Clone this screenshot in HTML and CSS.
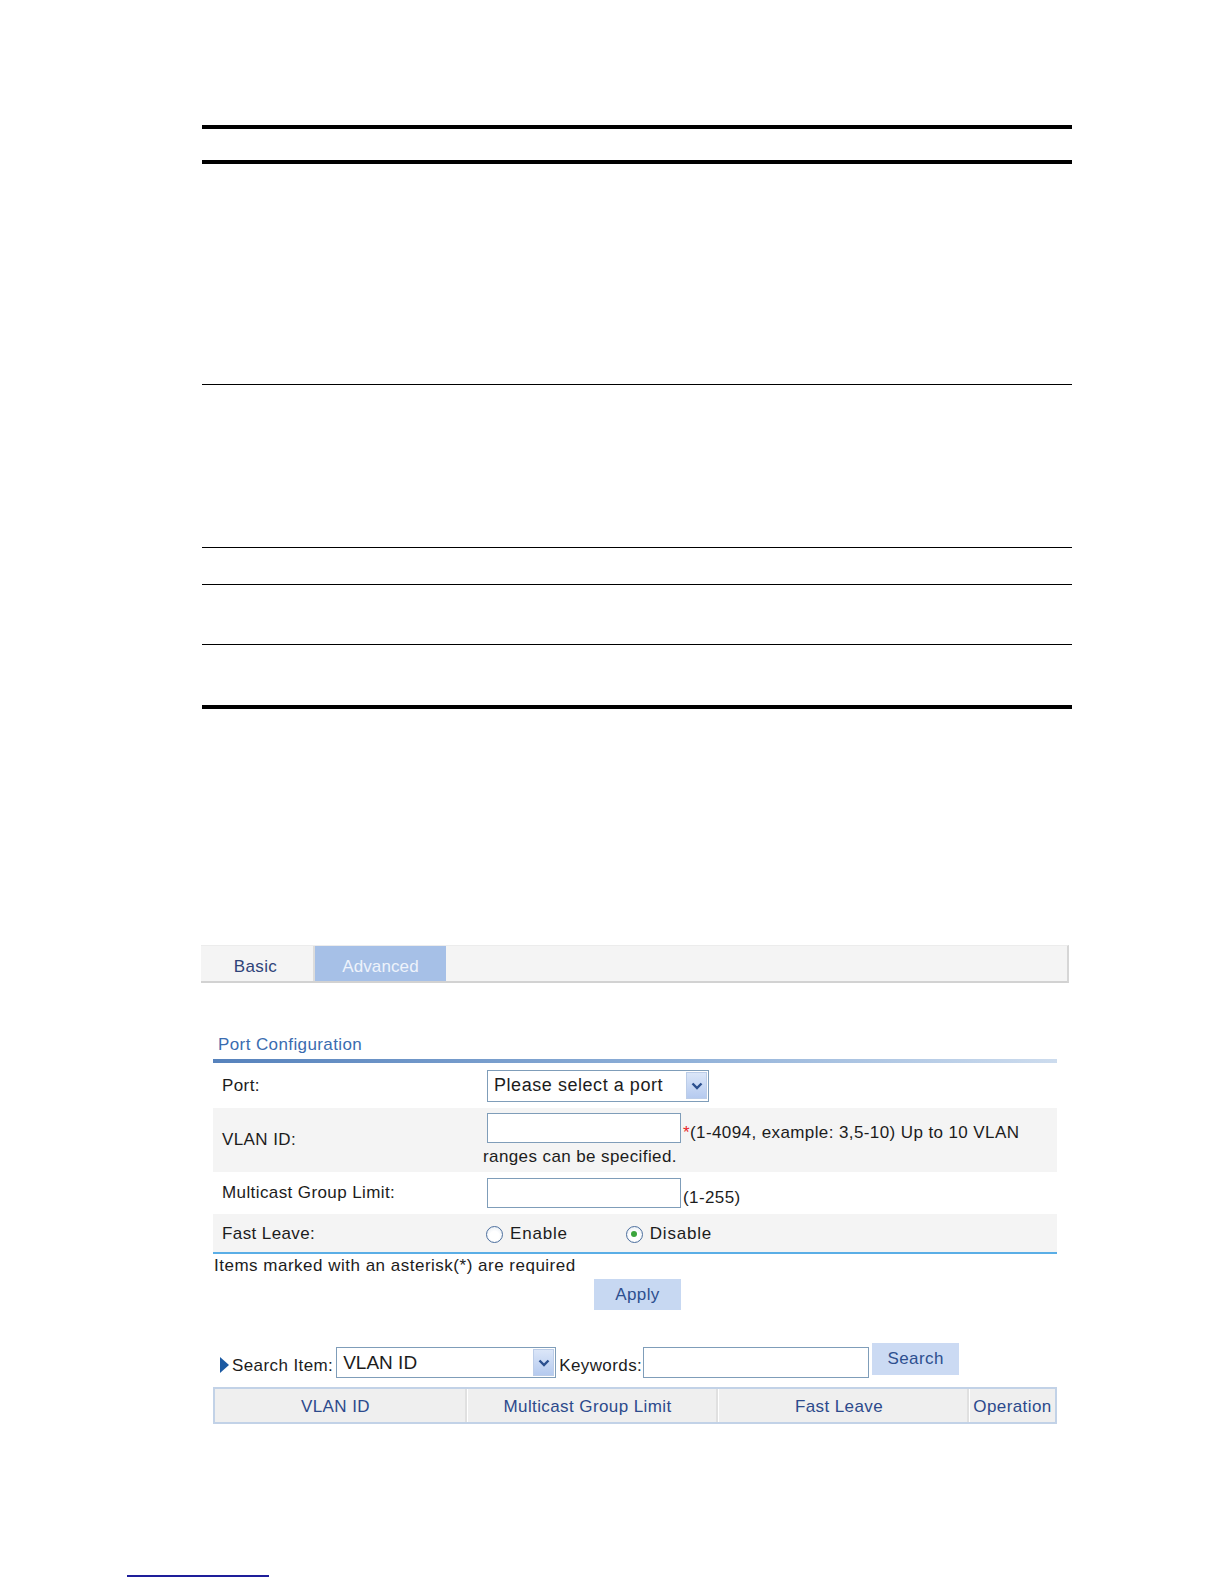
FILE: index.html
```html
<!DOCTYPE html>
<html>
<head>
<meta charset="utf-8">
<title>Port Configuration</title>
<link rel="stylesheet" href="styles.css">
</head>
<body>
<div class="page">
  <div class="doc">
    <div class="doc-row r1"></div>
    <div class="doc-row r2"></div>
    <div class="doc-row r3"></div>
    <div class="doc-row r4"></div>
    <div class="doc-row r5"></div>
    <div class="doc-row r6"></div>
  </div>

  <div class="ui">
    <div class="tabbar">
      <div class="tab tab-basic">Basic</div>
      <div class="tab tab-adv">Advanced</div>
    </div>

    <div class="section">
      <div class="sec-title">Port Configuration</div>
      <div class="form">
        <div class="row row-port">
          <div class="lbl">Port:</div>
          <div class="val">
            <div class="select sel-port">
              <span class="sel-text">Please select a port</span>
              <span class="sel-btn"><svg width="12" height="8" viewBox="0 0 12 8"><polyline points="1.5,1.5 6,6 10.5,1.5" fill="none" stroke="#2b4f8e" stroke-width="2.4"/></svg></span>
            </div>
          </div>
        </div>
        <div class="row alt row-vlan">
          <div class="lbl">VLAN ID:</div>
          <div class="val val-wrap">
            <span class="input in-vlan"></span><span class="hint nowrap"><span class="req">*</span>(1-4094, example: 3,5-10) Up to 10 VLAN</span><br><span class="hint2">ranges can be specified.</span>
          </div>
        </div>
        <div class="row row-mgl">
          <div class="lbl">Multicast Group Limit:</div>
          <div class="val val-line">
            <span class="input in-mgl"></span><span class="hint">(1-255)</span>
          </div>
        </div>
        <div class="row alt row-fl">
          <div class="lbl">Fast Leave:</div>
          <div class="val radios">
            <span class="radio-item"><span class="radio"></span>Enable</span>
            <span class="radio-item r-dis"><span class="radio on"></span>Disable</span>
          </div>
        </div>
      </div>
      <div class="note">Items marked with an asterisk(*) are required</div>
      <div class="apply-wrap"><span class="btn btn-apply">Apply</span></div>

      <div class="search">
        <span class="tri"></span>
        <span class="s-lbl">Search Item:</span>
        <div class="select sel-item">
          <span class="sel-text">VLAN ID</span>
          <span class="sel-btn"><svg width="12" height="8" viewBox="0 0 12 8"><polyline points="1.5,1.5 6,6 10.5,1.5" fill="none" stroke="#2b4f8e" stroke-width="2.4"/></svg></span>
        </div>
        <span class="s-lbl kw">Keywords:</span>
        <span class="input in-kw"></span>
        <span class="btn btn-search">Search</span>
      </div>

      <div class="thead">
        <div class="th c1">VLAN ID</div>
        <div class="th c2">Multicast Group Limit</div>
        <div class="th c3">Fast Leave</div>
        <div class="th c4">Operation</div>
      </div>
    </div>
  </div>

  <div class="footline"></div>
</div>
</body>
</html>
```

FILE: styles.css
```css
html, body {
  margin: 0;
  padding: 0;
  background: #ffffff;
}
body {
  font-family: "Liberation Sans", Arial, sans-serif;
  color: #1c1c1c;
}
.page {
  padding-top: 125px;
  width: 1224px;
}

/* document table */
.doc {
  margin-left: 202px;
  width: 870px;
  border-top: 4px solid #000;
  border-bottom: 4px solid #000;
}
.doc-row { border-bottom: 1px solid #000; }
.doc-row.r1 { height: 31px; border-bottom: 4px solid #000; }
.doc-row.r2 { height: 220px; }
.doc-row.r3 { height: 162px; }
.doc-row.r4 { height: 36px; }
.doc-row.r5 { height: 59px; }
.doc-row.r6 { height: 60px; border-bottom: 0; }

/* UI */
.ui {
  margin: 236px 0 0 201px;
  width: 868px;
  font-size: 17px;
  letter-spacing: 0.4px;
}
.tabbar {
  display: flex;
  height: 35px;
  background: #f4f4f4;
  border-top: 1px solid #ececec;
  border-bottom: 2px solid #d2d2d2;
  border-right: 2px solid #d6d6d6;
}
.tab {
  display: flex;
  align-items: center;
  justify-content: center;
  padding-top: 6px;
  box-sizing: border-box;
}
.tab-basic {
  width: 114px;
  color: #2e4379;
  border-right: 2px solid #dcdcdc;
  padding-right: 3px;
}
.tab-adv {
  width: 131px;
  background: #a6c0e7;
  color: #eef3fb;
  letter-spacing: 0.1px;
}

.section {
  margin: 51px 0 0 12px;
  width: 844px;
}
.sec-title {
  color: #3a6cb0;
  line-height: 22px;
  padding: 0 0 3px 5px;
  border-bottom: 4px solid transparent;
  border-image: linear-gradient(to right, #5682bc, #8fb0d8 55%, #cddcee) 1;
}

.row {
  display: grid;
  grid-template-columns: 270px 1fr;
  align-items: center;
}
.row.alt { background: #f4f4f4; }
.lbl { padding-left: 9px; }
.row-port { height: 45px; }
.row-vlan { height: 64px; }
.row-mgl { height: 42px; }
.row-fl { height: 38px; border-bottom: 2px solid #5aaee6; }
.row-fl .lbl { padding-top: 2px; }

.select {
  display: flex;
  align-items: center;
  box-sizing: border-box;
  border: 1px solid #7f9db9;
  background: #fff;
}
.sel-port { width: 222px; height: 32px; margin-left: 4px; }
.sel-text { flex: 1; padding-left: 6px; font-size: 18px; letter-spacing: 0.55px; }
.sel-btn {
  width: 21px;
  height: 27px;
  margin-right: 1px;
  display: flex;
  align-items: center;
  justify-content: center;
  background: linear-gradient(#dbe6f8, #b5caef);
  border: 1px solid #bccde8;
  box-sizing: border-box;
}

.input {
  display: inline-block;
  box-sizing: border-box;
  border: 1px solid #7f9db9;
  background: #fff;
  height: 30px;
  vertical-align: -5px;
}
.in-vlan, .in-mgl { width: 194px; margin-left: 4px; }
.hint { margin-left: 2px; }
.req { color: #e8242a; }
.nowrap { white-space: nowrap; }
.val-wrap { line-height: 24px; padding-top: 1px; }
.val-line { line-height: 24px; padding-top: 1px; }
.hint2 { line-height: 22px; }

.radios { display: flex; align-items: center; padding-top: 2px; }
.radio-item { display: inline-flex; align-items: center; letter-spacing: 0.8px; }
.r-dis { margin-left: 55px; }
.radio {
  width: 17px;
  height: 17px;
  box-sizing: border-box;
  border-radius: 50%;
  border: 1px solid #4c6f9e;
  background: radial-gradient(circle at 50% 60%, #ffffff 40%, #dfe6ee 100%);
  margin: 0 7px 0 3px;
  position: relative;
}
.radio.on::after {
  content: "";
  position: absolute;
  left: 4.5px;
  top: 4.5px;
  width: 6px;
  height: 6px;
  border-radius: 50%;
  background: #3ca53c;
}

.note { line-height: 23px; padding-left: 1px; letter-spacing: 0.5px; }
.apply-wrap { padding: 2px 0 0 381px; }
.btn {
  display: inline-flex;
  align-items: center;
  justify-content: center;
  background: #c7d8f2;
  color: #2d4f8f;
}
.btn-apply { width: 87px; height: 31px; }

.search {
  display: flex;
  align-items: flex-start;
  margin-top: 33px;
  height: 35px;
}
.tri {
  width: 0;
  height: 0;
  border-top: 8px solid transparent;
  border-bottom: 8px solid transparent;
  border-left: 9px solid #1c5aa2;
  margin: 14px 3px 0 7px;
}
.s-lbl { margin-top: 13px; }
.sel-item { width: 220px; height: 31px; margin: 4px 0 0 3px; }
.sel-item .sel-text { font-size: 19px; padding-left: 6px; letter-spacing: 0; }
.sel-item .sel-btn { height: 27px; }
.kw { margin-left: 3px; }
.in-kw { width: 226px; height: 31px; margin-top: 4px; margin-left: 1px; vertical-align: top; }
.btn-search { width: 87px; height: 32px; margin-left: 3px; background: #cbdaf3; }

.thead {
  display: flex;
  margin-top: 9px;
  width: 844px;
  height: 37px;
  box-sizing: border-box;
  border: 2px solid #c2d2e7;
  background: #efefef;
}
.th {
  display: flex;
  align-items: center;
  justify-content: center;
  color: #2c4a8c;
  padding-top: 2px;
  border-right: 1px solid #ffffff;
  box-shadow: inset -2px 0 0 #e0e0e0;
  box-sizing: border-box;
}
.th.c1 { width: 253px; padding-right: 11px; }
.th.c2 { width: 251px; padding-right: 11px; }
.th.c3 { width: 251px; padding-right: 10px; }
.th.c4 { flex: 1; border-right: 0; box-shadow: none; }

.footline {
  margin: 151px 0 0 127px;
  width: 142px;
  height: 2px;
  background: #1e1e9a;
}
```
